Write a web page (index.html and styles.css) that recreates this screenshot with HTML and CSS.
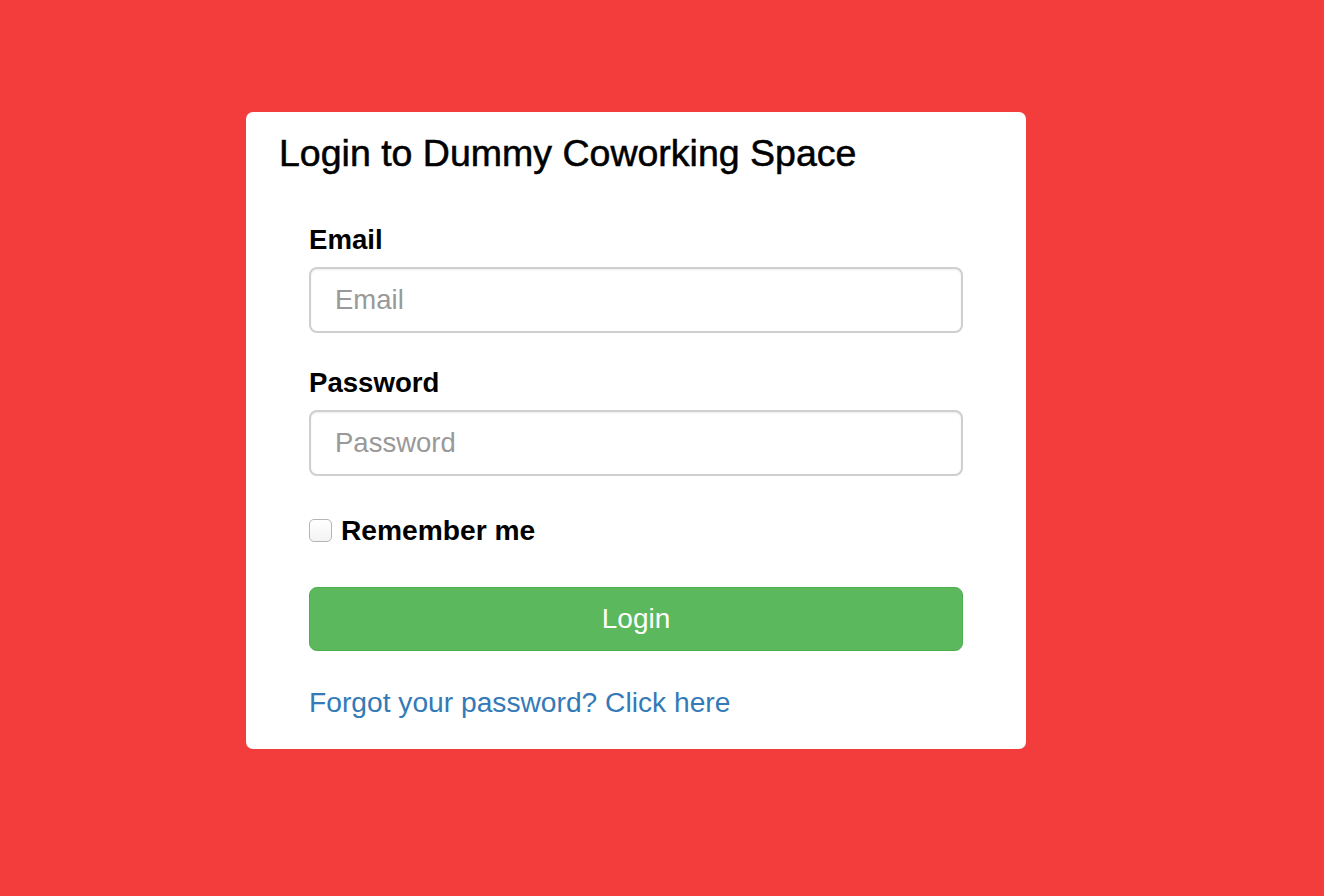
FILE: index.html
```html
<!DOCTYPE html>
<html>
<head>
<meta charset="utf-8">
<title>Login</title>
<link rel="stylesheet" href="styles.css">
</head>
<body>
<div class="card">
  <h1 class="title">Login to Dummy Coworking Space</h1>
  <form class="form">
    <div class="group">
      <label class="label">Email</label>
      <input class="input" type="text" placeholder="Email">
    </div>
    <div class="group">
      <label class="label">Password</label>
      <input class="input" type="password" placeholder="Password">
    </div>
    <div class="check-row">
      <span class="checkbox"></span>
      <span class="check-label">Remember me</span>
    </div>
    <button class="btn" type="button">Login</button>
    <a class="link" href="#">Forgot your password? Click here</a>
  </form>
</div>
</body>
</html>
```

FILE: styles.css
```css
html, body {
  margin: 0;
  padding: 0;
}
body {
  background: #f33d3d;
  font-family: "Liberation Sans", Arial, Helvetica, sans-serif;
  color: #000;
  min-height: 896px;
  overflow: hidden;
}
.card {
  width: 780px;
  margin: 112px 0 0 246px;
  background: #fff;
  border-radius: 7px;
  padding: 19px 0 31px 0;
  box-sizing: border-box;
}
.title {
  margin: 0 0 0 33px;
  font-size: 37.5px;
  line-height: 44px;
  font-weight: normal;
  -webkit-text-stroke: 0.55px #000;
}
.form {
  padding: 0 63px;
  margin-top: 49px;
  display: flex;
  flex-direction: column;
}
.group {
  display: flex;
  flex-direction: column;
  margin-bottom: 34px;
}
.label {
  font-size: 27.6px;
  line-height: 32px;
  font-weight: bold;
  margin-bottom: 11px;
}
.input {
  height: 66px;
  box-sizing: border-box;
  border: 2px solid #cfcfcf;
  border-radius: 8px;
  padding: 0 24px;
  font-family: inherit;
  font-size: 27.5px;
  color: #555;
  box-shadow: inset 0 1px 2px rgba(0,0,0,0.08);
  outline: none;
}
.input::placeholder {
  color: #999;
}
.check-row {
  display: flex;
  align-items: center;
  gap: 9px;
  height: 32px;
  margin-top: 4px;
}
.checkbox {
  width: 23px;
  height: 23px;
  box-sizing: border-box;
  border: 1.5px solid #b5b5b5;
  border-radius: 5px;
  background: linear-gradient(#fff, #f3f3f3);
}
.check-label {
  font-size: 28.2px;
  line-height: 32px;
  font-weight: bold;
}
.btn {
  margin-top: 41px;
  height: 64px;
  background: #5cb85c;
  border: 1px solid #4cae4c;
  border-radius: 8px;
  color: #fff;
  font-family: inherit;
  font-size: 28px;
  padding: 0;
}
.link {
  margin-top: 35px;
  font-size: 28.2px;
  line-height: 32px;
  color: #337ab7;
  text-decoration: none;
  align-self: flex-start;
}
```
